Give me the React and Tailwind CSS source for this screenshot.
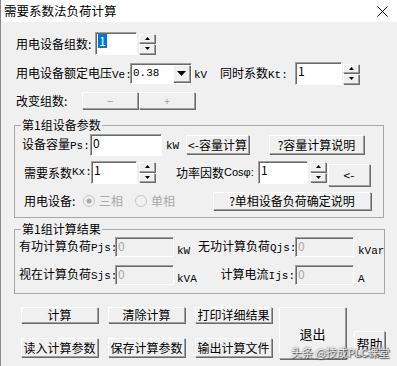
import React from 'react';

const Btn = ({ className = '', children }) => (
  <div
    className={`flex items-center justify-center bg-[#f0f0f0] border border-t-white border-l-white border-r-[#a0a0a0] border-b-[#a0a0a0] shadow-[1px_1px_0_#696969] leading-none whitespace-nowrap ${className}`}
  >
    {children}
  </div>
);

const Field = ({ className = '', disabled = false, children }) => (
  <div
    className={`flex items-start pl-[2px] pt-[1px] border border-t-[#a0a0a0] border-l-[#a0a0a0] border-b-white border-r-white shadow-[inset_1px_1px_0_#696969] leading-[14px] ${disabled ? 'bg-[#f0f0f0] text-[#a8a8a8]' : 'bg-white text-black'} ${className}`}
  >
    {children}
  </div>
);

const Arrow = ({ down }) => (
  <svg width="5" height="3" viewBox="0 0 5 3">
    <path d={down ? 'M0 0H5L2.5 3Z' : 'M2.5 0L5 3H0Z'} fill="#000" />
  </svg>
);

const Spin = ({ className = '' }) => (
  <div className={`flex flex-col gap-[1px] w-[16px] h-[20px] ${className}`}>
    <Btn className="flex-1">
      <Arrow />
    </Btn>
    <Btn className="flex-1">
      <Arrow down />
    </Btn>
  </div>
);

const Radio = ({ checked }) => (
  <svg width="12" height="12" viewBox="0 0 12 12" className="shrink-0">
    <circle cx="6" cy="6" r="5.5" fill="#f0f0f0" stroke="#c4c4c4" />
    {checked && <circle cx="6" cy="6" r="2.5" fill="#a8a8a8" />}
  </svg>
);

// 拉丁字母部分用等寬字體，模擬點陣字
const L = ({ children }) => (
  <span className="font-['Liberation_Mono',monospace] text-[11px]">{children}</span>
);

export default function App() {
  return (
    <div className="relative w-[397px] h-[366px] overflow-hidden bg-[#f0f0f0] border-l border-[#8a8a8a] font-['Noto_Sans_CJK_SC','Liberation_Sans',sans-serif] text-[12px] text-black">
      {/* 標題列 */}
      <div className="h-[22px] bg-white flex items-center justify-between pl-[3px] pr-[9px]">
        <span className="text-[12.5px] leading-none">需要系数法负荷计算</span>
        <svg width="11" height="11" viewBox="0 0 11 11">
          <path d="M0.5 0.5L10.5 10.5M10.5 0.5L0.5 10.5" stroke="#000" strokeWidth="1" />
        </svg>
      </div>

      {/* 組數 */}
      <div className="flex items-center mt-[10px] h-[23px] pl-[15px]">
        <span className="w-[79px] whitespace-nowrap">用电设备组数:</span>
        <Field className="w-[42px] h-[23px]">
          <span className="bg-[#0078d7] text-white px-[1px]">1</span>
        </Field>
        <Spin className="ml-[2px]" />
      </div>

      {/* 電壓 / 同時係數 */}
      <div className="flex items-center mt-[7px] h-[23px] pl-[15px]">
        <span className="w-[114px] whitespace-nowrap">
          用电设备额定电压<L>Ve:</L>
        </span>
        <div className="flex w-[62px] h-[21px] bg-white border border-t-[#a0a0a0] border-l-[#a0a0a0] border-b-white border-r-white shadow-[inset_1px_1px_0_#696969]">
          <span className="flex-1 pl-[2px] leading-[19px] font-['Liberation_Mono',monospace] text-[11px]">0.38</span>
          <Btn className="w-[17px] m-[1px]">
            <svg width="9" height="5" viewBox="0 0 9 5">
              <path d="M0 0H9L4.5 5Z" fill="#000" />
            </svg>
          </Btn>
        </div>
        <span className="w-[28px] pl-[2px]">
          <L>kV</L>
        </span>
        <span className="w-[75px] whitespace-nowrap">
          同时系数<L>Kt:</L>
        </span>
        <Field className="w-[47px] h-[23px]">1</Field>
        <Spin className="ml-[1px]" />
      </div>

      {/* 改變組數 */}
      <div className="flex items-center mt-[7px] h-[17px] pl-[15px]">
        <span className="w-[66px] whitespace-nowrap">改变组数:</span>
        <Btn className="w-[56px] h-[17px] text-[#a0a0a0]">−</Btn>
        <Btn className="w-[56px] h-[17px] ml-[1px] text-[#a0a0a0] text-[10px]">+</Btn>
      </div>

      {/* 第1組設備參數 */}
      <fieldset className="mt-[9px] ml-[13px] w-[370px] border border-[#a8a8a8] pb-[7px]">
        <legend className="ml-[6px] px-[1px] leading-[14px]">第1组设备参数</legend>

        <div className="flex items-center mt-[1px] h-[23px] pl-[7px]">
          <span className="w-[68px] whitespace-nowrap">
            设备容量<L>Ps:</L>
          </span>
          <Field className="w-[72px] h-[22px]">0</Field>
          <span className="w-[24px] pl-[4px]">
            <L>kW</L>
          </span>
          <Btn className="w-[63px] h-[19px]">&lt;-容量计算</Btn>
          <Btn className="w-[95px] h-[19px] ml-[20px]">?容量计算说明</Btn>
        </div>

        <div className="flex items-start mt-[5px] h-[25px] pl-[9px]">
          <span className="w-[67px] h-[23px] flex items-center whitespace-nowrap">
            需要系数<L>Kx:</L>
          </span>
          <Field className="w-[46px] h-[23px]">1</Field>
          <Spin className="ml-[2px] mt-[1px]" />
          <span className="w-[82px] h-[23px] ml-[21px] flex items-center whitespace-nowrap">
            功率因数<span className="font-['Liberation_Sans'] text-[11px]">Cosφ:</span>
          </span>
          <Field className="w-[50px] h-[23px]">1</Field>
          <Spin className="ml-[2px] mt-[1px]" />
          <Btn className="w-[42px] h-[22px] ml-[2px] mt-[3px]">&lt;-</Btn>
        </div>

        <div className="flex items-center mt-[6px] h-[18px] pl-[9px]">
          <span className="w-[59px] whitespace-nowrap">用电设备:</span>
          <span className="flex items-center gap-[4px] text-[#a8a8a8]">
            <Radio checked />
            三相
          </span>
          <span className="flex items-center gap-[4px] ml-[12px] text-[#a8a8a8]">
            <Radio />
            单相
          </span>
          <Btn className="w-[158px] h-[18px] ml-auto mr-[12px]">?单相设备负荷确定说明</Btn>
        </div>
      </fieldset>

      {/* 第1組計算結果 */}
      <fieldset className="mt-[4px] ml-[13px] w-[370px] border border-[#a8a8a8] pb-[8px]">
        <legend className="ml-[6px] px-[1px] leading-[14px]">第1组计算结果</legend>

        <div className="flex items-center mt-[1px] h-[20px] pl-[4px]">
          <span className="w-[96px] whitespace-nowrap">
            有功计算负荷<L>Pjs:</L>
          </span>
          <Field disabled className="w-[59px] h-[20px]">0</Field>
          <span className="w-[24px] pl-[3px] self-end leading-[12px]">
            <L>kW</L>
          </span>
          <span className="w-[97px] text-right whitespace-nowrap">
            无功计算负荷<L>Qjs:</L>
          </span>
          <Field disabled className="w-[59px] h-[20px]">0</Field>
          <span className="pl-[4px] self-end leading-[12px]">
            <L>kVar</L>
          </span>
        </div>

        <div className="flex items-center mt-[8px] h-[20px] pl-[4px]">
          <span className="w-[96px] whitespace-nowrap">
            视在计算负荷<L>Sjs:</L>
          </span>
          <Field disabled className="w-[59px] h-[20px]">0</Field>
          <span className="w-[24px] pl-[3px] self-end leading-[12px]">
            <L>kVA</L>
          </span>
          <span className="w-[97px] text-right whitespace-nowrap">
            计算电流<L>Ijs:</L>
          </span>
          <Field disabled className="w-[59px] h-[20px]">0</Field>
          <span className="pl-[4px] self-end leading-[12px]">
            <L>A</L>
          </span>
        </div>
      </fieldset>

      {/* 底部按鈕 */}
      <div className="flex items-start mt-[13px] pl-[20px]">
        <div className="flex flex-col gap-[15px]">
          <div className="flex gap-[10px]">
            <Btn className="w-[77px] h-[16px]">计算</Btn>
            <Btn className="w-[77px] h-[16px]">清除计算</Btn>
            <Btn className="w-[77px] h-[16px]">打印详细结果</Btn>
          </div>
          <div className="flex gap-[10px]">
            <Btn className="w-[77px] h-[19px]">读入计算参数</Btn>
            <Btn className="w-[77px] h-[19px]">保存计算参数</Btn>
            <Btn className="w-[77px] h-[19px]">输出计算文件</Btn>
          </div>
        </div>
        <Btn className="w-[67px] h-[52px] ml-[7px] text-[13px]">退出</Btn>
        <Btn className="w-[31px] h-[25px] ml-[8px] mt-[24px] text-[13px]">帮助</Btn>
      </div>

      {/* 浮水印 */}
      <span className="absolute left-[290px] top-[347px] text-[11px] leading-none text-white/85 [text-shadow:0_0_2px_#555,1px_1px_1px_#444] whitespace-nowrap">
        头条 @技成PLC课堂
      </span>
    </div>
  );
}
